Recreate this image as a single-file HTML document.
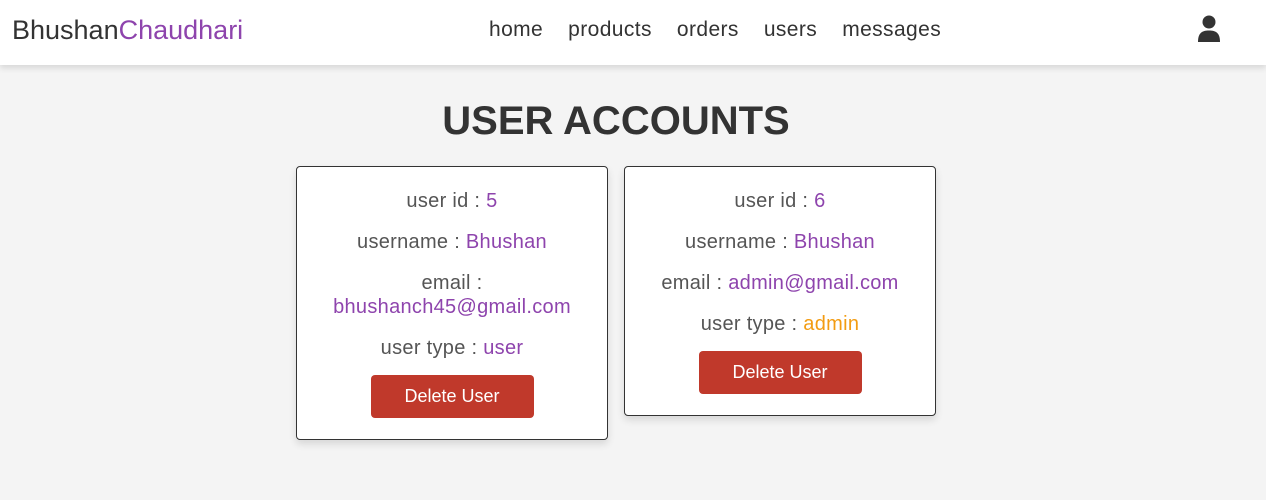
<!DOCTYPE html>
<html><head><style>
*{margin:0;padding:0;box-sizing:border-box}
body{width:1266px;height:500px;background:#f4f4f4;font-family:"Liberation Sans",sans-serif;overflow:hidden;position:relative}
.hdr{position:absolute;left:0;top:0;width:1266px;height:65px;background:#fff;box-shadow:0 3px 6px rgba(0,0,0,.12)}
.logo{position:absolute;left:12px;top:15px;font-size:27px;color:#333}
.logo span{color:#8e44ad}
.nav{position:absolute;left:489px;top:18px;font-size:21px;color:#333;white-space:nowrap}
.nav a{margin-right:25px;color:#333;text-decoration:none;letter-spacing:.4px}
.user{position:absolute;left:1197px;top:15px}
h1{position:absolute;top:99px;left:0;width:1232px;text-align:center;font-size:40px;font-weight:bold;color:#333}
.card{position:absolute;top:166px;width:312px;background:#fff;border:1px solid #333;border-radius:4px;box-shadow:0 4px 8px rgba(0,0,0,.12);text-align:center;padding:22px 6px 21px}
.card p{font-size:20px;line-height:24px;color:#555;margin-bottom:17px;letter-spacing:.3px}
.card p span{color:#8e44ad}
.card p span.o{color:#f39c12}
.btn{display:inline-block;width:163px;height:43px;line-height:43px;background:#c0392b;color:#fff;font-size:18px;border-radius:4px;margin-top:-2px}
</style></head><body>
<div class="hdr">
<div class="logo">Bhushan<span>Chaudhari</span></div>
<div class="nav"><a>home</a><a>products</a><a>orders</a><a>users</a><a>messages</a></div>
<svg class="user" width="24" height="28" viewBox="0 0 24 28"><circle cx="12" cy="7" r="6.5" fill="#333"/><path d="M1 27 C1 18 5 15.5 12 15.5 C19 15.5 23 18 23 27 Z" fill="#333"/></svg>
</div>
<h1>USER ACCOUNTS</h1>
<div class="card" style="left:296px">
<p>user id : <span>5</span></p>
<p>username : <span>Bhushan</span></p>
<p>email :<br><span>bhushanch45@gmail.com</span></p>
<p>user type : <span>user</span></p>
<div class="btn">Delete User</div>
</div>
<div class="card" style="left:624px">
<p>user id : <span>6</span></p>
<p>username : <span>Bhushan</span></p>
<p>email : <span>admin@gmail.com</span></p>
<p>user type : <span class="o">admin</span></p>
<div class="btn">Delete User</div>
</div>
</body></html>
